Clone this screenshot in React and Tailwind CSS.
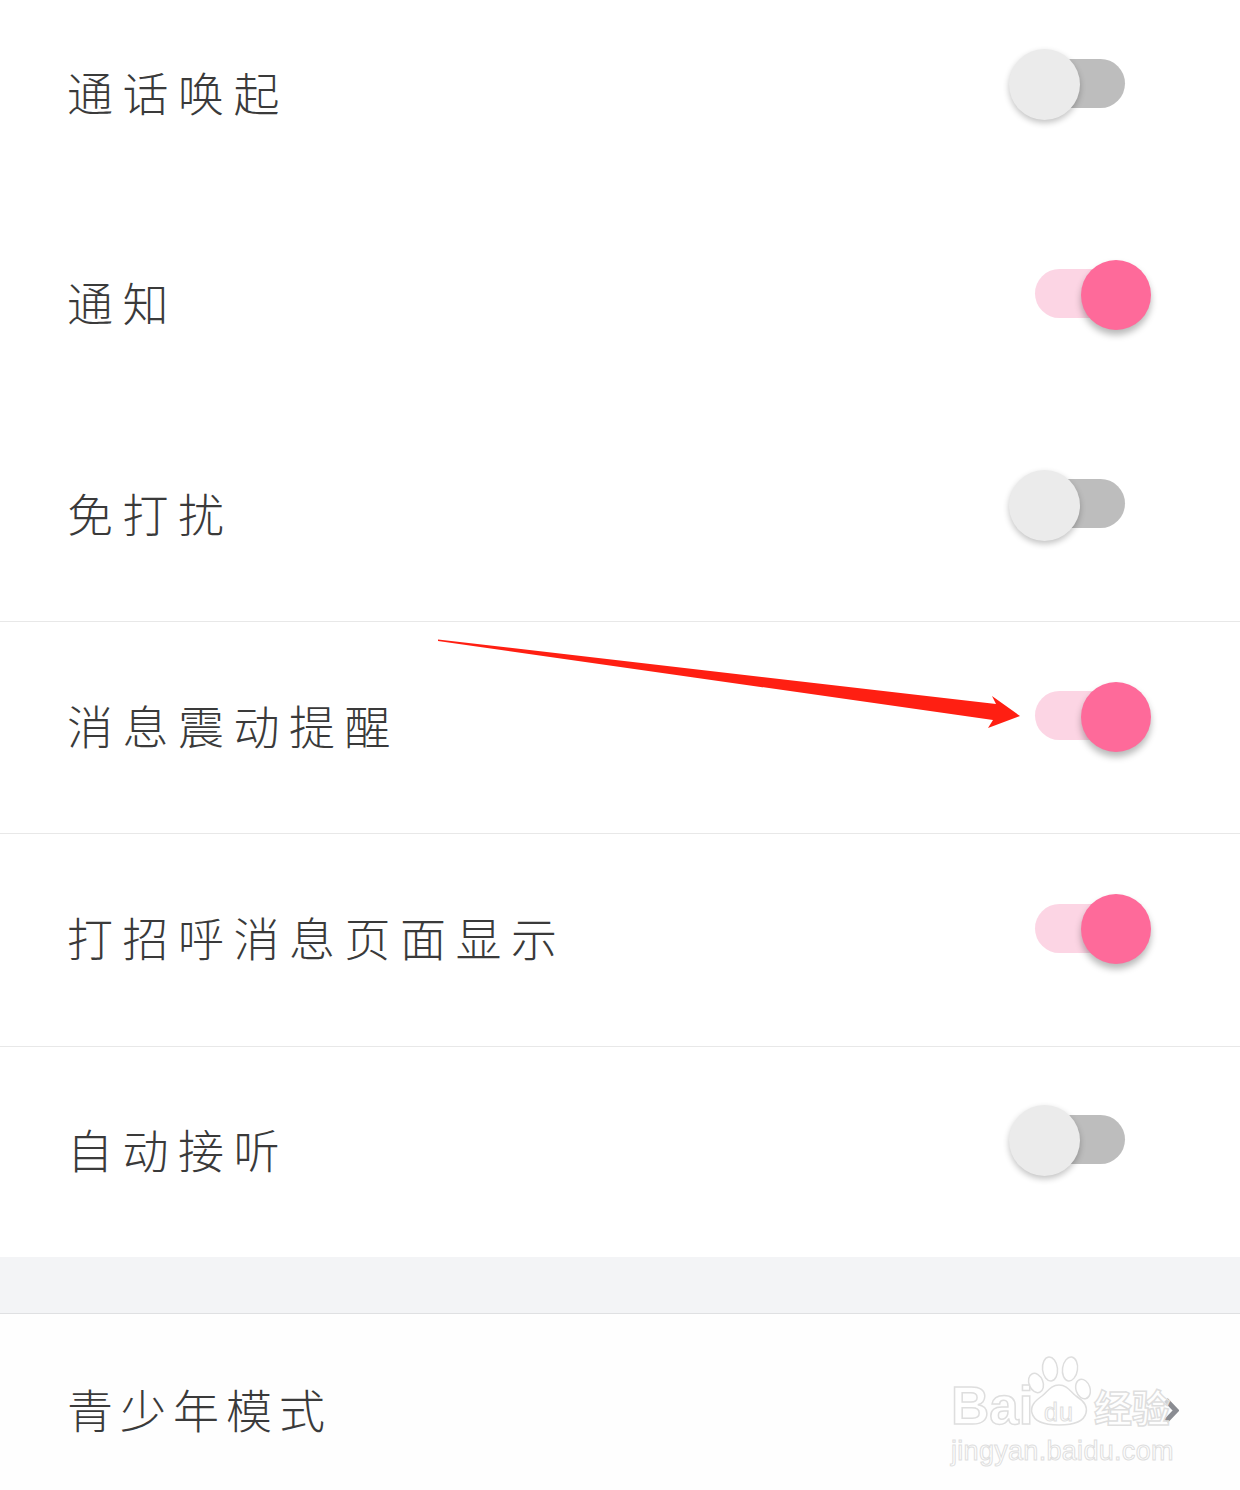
import React from "react";

const cjk = "font-['Noto_Sans_CJK_SC','Noto_Sans',sans-serif]";
const latin = "font-['Liberation_Sans',sans-serif]";
const outline = "text-white/60 [-webkit-text-stroke:1.5px_#dedede]";

const rows = [
  { label: "通话唤起", on: false, height: "h-[209px] pt-[1px]", lift: "mb-[21px]" },
  { label: "通知", on: true, height: "h-[211px]", lift: "mb-[20px]" },
  { label: "免打扰", on: false, height: "h-[212px]", lift: "mb-[21px]", border: true },
  { label: "消息震动提醒", on: true, height: "h-[212px]", lift: "mb-[22px]", border: true },
  { label: "打招呼消息页面显示", on: true, height: "h-[213px]", lift: "mb-[22px]", border: true },
  { label: "自动接听", on: false, height: "h-[210px]", lift: "mb-[23px]" },
];

function Toggle({ on, lift }) {
  if (on) {
    return (
      <div className={`${lift} mr-[89px] flex items-center`}>
        <div className="mb-[2px] h-[49px] w-[66px] rounded-l-full bg-[#fcd5e4]" />
        <div className="-ml-[20px] h-[70px] w-[70px] rounded-full bg-[#fe6a9a] shadow-[0_5px_7px_rgba(0,0,0,0.28)]" />
      </div>
    );
  }
  return (
    <div className={`${lift} mr-[115px] flex items-center`}>
      <div className="relative z-10 h-[71px] w-[71px] rounded-full bg-[#ebebeb] shadow-[0_3px_6px_rgba(0,0,0,0.24)]" />
      <div className="-ml-[26px] mb-[3px] h-[49px] w-[71px] rounded-r-full bg-[#bdbdbd]" />
    </div>
  );
}

function Row({ label, on, height, lift, border }) {
  return (
    <div className={`flex items-center justify-between pl-[67px] ${height} ${border ? "border-b border-[#e8e8e8]" : ""}`}>
      <span className={`${cjk} pb-[8px] text-[46px] font-light leading-none tracking-[9.5px] text-[#3a3a3a]`}>{label}</span>
      <Toggle on={on} lift={lift} />
    </div>
  );
}

function Paw() {
  return (
    <div className="relative -ml-[4px] -mt-[36px] h-[74px] w-[64px] shrink-0">
      <svg className="absolute inset-0" width="64" height="74" viewBox="0 0 64 74" fill="#ffffff" fillOpacity="0.6" stroke="#dedede" strokeWidth="1.5">
        <ellipse cx="9" cy="28" rx="7" ry="10" transform="rotate(-22 9 28)" />
        <ellipse cx="23" cy="14" rx="7.5" ry="12" transform="rotate(-6 23 14)" />
        <ellipse cx="43" cy="14" rx="7.5" ry="12" transform="rotate(8 43 14)" />
        <ellipse cx="56" cy="34" rx="7" ry="10" transform="rotate(-18 56 34)" />
        <path d="M32 30c8 0 11 6 17 11 8 5 12 10 10 17-2 8-11 12-27 12S7 66 5 58c-2-7 3-12 10-17 6-5 9-11 17-11z" />
      </svg>
      <span className={`${latin} absolute bottom-[4px] left-0 right-0 text-center text-[25px] leading-none tracking-[1px] text-white/60 [-webkit-text-stroke:1px_#dedede]`}>du</span>
    </div>
  );
}

function Watermark() {
  return (
    <div className="absolute left-[951px] top-[1383px] flex w-[224px] select-none flex-col">
      <div className="flex items-end">
        <span className={`${latin} w-[80px] shrink-0 text-[53px] font-bold leading-[46px] ${outline}`}>Bai</span>
        <Paw />
        <span className={`${cjk} ml-[3px] shrink-0 text-[38px] font-bold leading-[46px] ${outline}`}>经验</span>
      </div>
      <span className={`${latin} mt-[7px] text-[27px] leading-[30px] tracking-[0.3px] text-white/60 [-webkit-text-stroke:1px_#dedede]`}>jingyan.baidu.com</span>
    </div>
  );
}

export default function App() {
  return (
    <div className="relative h-[1490px] w-[1240px] overflow-hidden bg-white">
      <div className="-mt-[10px]">
        {rows.map((row) => (
          <Row key={row.label} {...row} />
        ))}
      </div>
      <div className="h-[57px] border-b border-[#dfe0e2] bg-[#f3f4f6]" />
      <div className="flex h-[196px] items-center justify-between bg-[#fefefe] pl-[67px] pr-[61px]">
        <span className={`${cjk} pb-[8px] text-[46px] font-light leading-none tracking-[7px] text-[#3a3a3a]`}>青少年模式</span>
        <svg className="mb-[4px]" width="16" height="25" viewBox="0 0 16 25" fill="none" stroke="#8a8c92" strokeWidth="5">
          <path d="M3 2l10 10.5L3 23" />
        </svg>
      </div>

      <Watermark />

      {/* red annotation arrow */}
      <svg className="absolute left-0 top-0" width="1240" height="1490" fill="#ff1f12">
        <path d="M438 639.5L996 704L992 696L1020 716L988 728L993 720L438 641Z" />
      </svg>
    </div>
  );
}
